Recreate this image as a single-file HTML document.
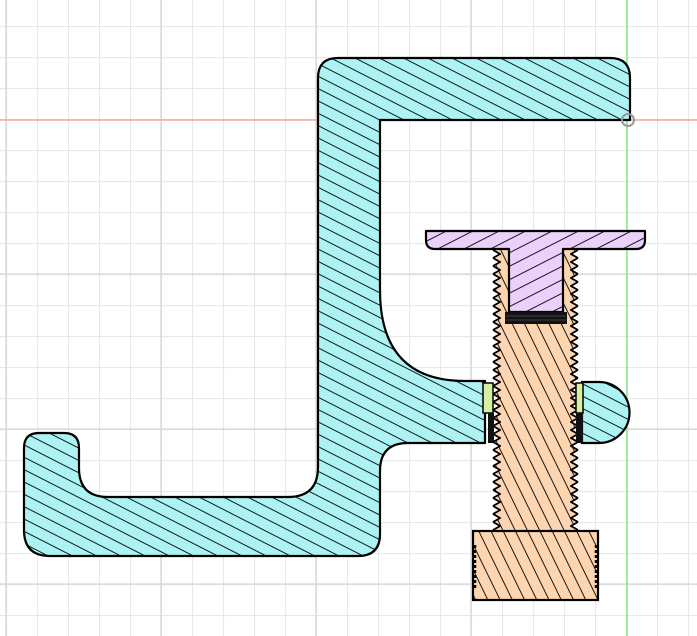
<!DOCTYPE html>
<html><head><meta charset="utf-8"><style>
html,body{margin:0;padding:0;background:#fff;width:697px;height:636px;overflow:hidden}
svg{display:block}
</style></head><body>
<svg width="697" height="636" viewBox="0 0 697 636" xmlns="http://www.w3.org/2000/svg">
<defs>
<pattern id="gmin" width="31" height="31" patternUnits="userSpaceOnUse" x="6" y="26">
<path d="M0.5 0V31M0 0.5H31" stroke="#e8e8e8" stroke-width="1.2" fill="none"/>
</pattern>
<pattern id="hc" width="11" height="11" patternUnits="userSpaceOnUse" patternTransform="rotate(27)">
<rect width="11" height="11" fill="#aef3f3"/><line x1="0" y1="0.5" x2="11" y2="0.5" stroke="#000" stroke-width="0.9"/>
</pattern>
<pattern id="hp" width="11" height="11" patternUnits="userSpaceOnUse" patternTransform="rotate(64)">
<rect width="11" height="11" fill="#fdd5b0"/><line x1="0" y1="0.5" x2="11" y2="0.5" stroke="#000" stroke-width="0.9"/>
</pattern>
<pattern id="hv" width="12" height="12" patternUnits="userSpaceOnUse" patternTransform="rotate(-27)">
<rect width="12" height="12" fill="#ead0fa"/><line x1="0" y1="0.5" x2="12" y2="0.5" stroke="#000" stroke-width="0.9"/>
</pattern>
<pattern id="thL" width="9" height="8" patternUnits="userSpaceOnUse" x="492" y="250">
<polygon points="0,0 1,0 8,4 1,8 0,8" fill="#fff"/>
<polyline points="1,0 8,4 1,8" fill="none" stroke="#000" stroke-width="1.8"/>
</pattern>
<pattern id="thR" width="9" height="8" patternUnits="userSpaceOnUse" x="570" y="250">
<polygon points="9,0 8,0 1,4 8,8 9,8" fill="#fff"/>
<polyline points="8,0 1,4 8,8" fill="none" stroke="#000" stroke-width="1.8"/>
</pattern>
</defs>
<rect width="697" height="636" fill="#fff"/>
<rect width="697" height="636" fill="url(#gmin)"/>
<g stroke="#d6d6d6" stroke-width="1.3">
<line x1="6" y1="0" x2="6" y2="636"/><line x1="161" y1="0" x2="161" y2="636"/><line x1="316" y1="0" x2="316" y2="636"/><line x1="471" y1="0" x2="471" y2="636"/>
<line x1="0" y1="274" x2="697" y2="274"/><line x1="0" y1="429" x2="697" y2="429"/><line x1="0" y1="584" x2="697" y2="584"/>
</g>
<line x1="0" y1="120" x2="697" y2="120" stroke="#f5a5a5" stroke-width="1.5"/>
<line x1="627" y1="0" x2="627" y2="636" stroke="#7fea7f" stroke-width="1.5"/>

<path d="M338 58 H610 Q630 58 630 78 V120 H380 V290 Q380 381 465 381 H485 V443 H408 Q380 443 380 471 V534 Q380 556 358 556 H50 Q24 556 24 530 V448 Q24 433 39 433 H64 Q79 433 79 448 V468 Q79 497 108 497 H288 Q318 497 318 467 V78 Q318 58 338 58 Z" fill="url(#hc)" stroke="#000" stroke-width="2.2" stroke-linejoin="round"/>
<path d="M582 382 H599 A30.5 30.5 0 0 1 599 443 H582 Z" fill="url(#hc)" stroke="#000" stroke-width="2.2"/>

<rect x="495" y="250" width="81" height="282" fill="url(#hp)"/>
<rect x="492" y="250" width="9" height="281" fill="url(#thL)"/>
<rect x="570" y="250" width="9" height="281" fill="url(#thR)"/>
<rect x="473" y="531" width="125" height="69" fill="url(#hp)" stroke="#000" stroke-width="2.2"/>
<line x1="475" y1="545" x2="475" y2="590" stroke="#000" stroke-width="2.5" stroke-dasharray="3 2"/>
<line x1="596" y1="545" x2="596" y2="590" stroke="#000" stroke-width="2.5" stroke-dasharray="3 2"/>

<rect x="483" y="383" width="10" height="30" fill="#d4f0a0" stroke="#000" stroke-width="1.5"/>
<rect x="576" y="383" width="7" height="30" fill="#d4f0a0" stroke="#000" stroke-width="1.5"/>
<rect x="488" y="413" width="6" height="30" fill="#111"/>
<rect x="576" y="413" width="7" height="30" fill="#111"/>

<path d="M426 231 H645 V240 Q645 249 636 249 H563 V312 H509 V249 H435 Q426 249 426 240 Z" fill="url(#hv)" stroke="#000" stroke-width="2.2" stroke-linejoin="round"/>
<rect x="505" y="312" width="62" height="12" fill="#111"/>
<line x1="506" y1="316" x2="566" y2="316" stroke="#555" stroke-width="0.8"/>
<line x1="506" y1="320" x2="566" y2="320" stroke="#555" stroke-width="0.8"/>

<circle cx="628" cy="120" r="6" fill="none" stroke="#999" stroke-width="2"/>
</svg>
</body></html>
